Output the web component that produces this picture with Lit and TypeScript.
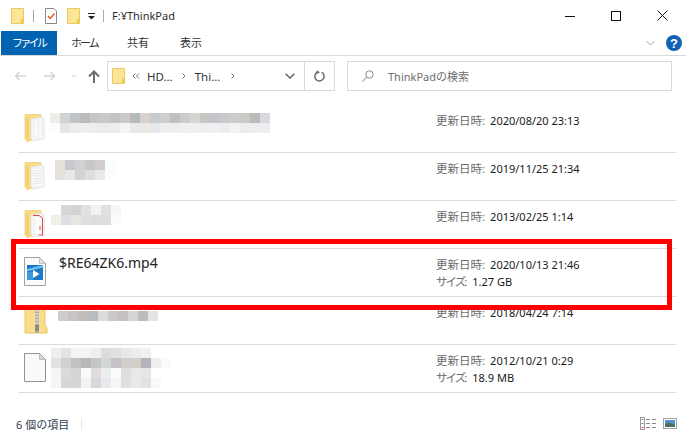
import { LitElement, html, css, svg } from "lit";
import { customElement } from "lit/decorators.js";

type Mosaic = { left: number; top: number; cells: string[][]; offsets?: number[] };

const folderDoc = (kind: "plain" | "lined" | "red") => html`<svg class="ficon" width="24" height="30" viewBox="0 0 24 30">
  <path d="M1 1.5H17V4H17.5V25L3 28.5 1 26Z" fill="#f9dd8c" stroke="#eccb6c" stroke-width=".7"/>
  <path d="M1.5 4V25.5L5 27.5V5Z" fill="#f4d070"/>
  <path d="M7 6 17 4 20 6V26L10 28 7 26Z" fill="#f7f7f7" stroke="#e0e0e0" stroke-width=".8"/>
  <path d="M10 7H18V25.5H10Z" fill="#fbfbfb" stroke="#e6e6e6" stroke-width=".7"/>
  <path d="M18 9 21 9.5V26.5L14 27.5 18 25.5Z" fill="#f0f0f0"/>
  ${kind === "lined" ? svg`<path d="M11 10h6M11 12.5h6M11 15h6M11 17.5h6M11 20h6M11 22.5h6" stroke="#dedede" stroke-width=".8"/>` : ""}
  ${kind === "plain" ? svg`<path d="M14 7V25" stroke="#e4e4e4" stroke-width=".8"/>` : ""}
  ${kind === "red" ? svg`<path d="M9 6.5H15L18.5 9V26H15" fill="none" stroke="#e8474a" stroke-width="1"/><path d="M16 17v4" stroke="#e8474a" stroke-width="1"/>` : ""}
</svg>`;

const videoIcon = html`<svg class="ficon" width="22" height="29" viewBox="0 0 22 29">
  <path d="M.5.5H15.5L21.5 6.5V28.5H.5Z" fill="#fafafa" stroke="#a2a2a2"/>
  <path d="M15.5.5V6.5H21.5Z" fill="#e2e2e2" stroke="#a8a8a8" stroke-width=".6"/>
  <rect x="3" y="8" width="16" height="15" fill="#1b78c4"/>
  <path d="M3 12 19 8V10.5L3 14.5Z" fill="#6cc0f0"/>
  <path d="M3 15H9V23H3Z" fill="#3f97da"/>
  <path d="M9 13 15.5 17 9 21Z" fill="#ffffff"/>
</svg>`;

const zipIcon = html`<svg class="ficon" width="24" height="29" viewBox="0 0 24 29">
  <path d="M1 1H21V20L23 23V28H1Z" fill="#f9dd8c" stroke="#ecc861"/>
  <rect x="11" y="0" width="4" height="28" fill="#b0aca0"/>
  <path d="M11 3h4M11 6h4M11 9h4M11 12h4M11 15h4M11 18h4" stroke="#eeeeee" stroke-width="1"/>
  <rect x="11" y="20" width="4" height="6" fill="#8d8d86"/>
</svg>`;

const blankIcon = html`<svg class="ficon" width="22" height="29" viewBox="0 0 22 29">
  <path d="M.5.5H15.5L21.5 6.5V28.5H.5Z" fill="#f8f9fa" stroke="#939393"/>
  <path d="M15.5.5V6.5H21.5Z" fill="#d6d6d6" stroke="#a0a0a0" stroke-width=".6"/>
</svg>`;

const smallFolder = html`<svg width="13" height="16" viewBox="0 0 13 16">
  <path d="M.5.5H12.5V15.5H.5Z" fill="#fbe597" stroke="#ecca62"/>
  <path d="M10 10.5H12.5V15.5H10Z" fill="#f2c94f"/>
</svg>`;

const rows: { icon: unknown; date: string; size?: string; name?: string; mosaic?: Mosaic }[] = [
  {
    icon: folderDoc("plain"),
    date: "2020/08/20 23:13",
    mosaic: {
      left: 0, top: 8,
      cells: [
        ["f0ece8","d0d4d6","c0c2c4","bbbcb9","c8c6c4","c9c8c7","c2c4c3","ccc9c8","b6bab9","d8d2cc","c8ccd2","cfcecd","c0c0c0","ccccd0","d4d6d2","c8c6c4","c4c6cc","cac8c8","cccccb","c8cac4","bebabc","d8d8de"],
        ["fcfcfb","e6e5e4","eeedeb","eceef0","ededee","eeecea","eceeee","f4f4f4","e8e9e9","ece9e4","e4e8ec","eceef0","eeeeec","f0f0f0","eef0ef","f0eeec","f0f0f2","ecedf0","f4f3f1","eceeee","f0eeec","eeeef2"],
      ],
    },
  },
  {
    icon: folderDoc("lined"),
    date: "2019/11/25 21:34",
    mosaic: {
      left: 5, top: 7,
      cells: [
        ["e4e0dc","c8c8d0","d4d0d2","c8c8c8","d2ced0","fcfdff"],
        ["e4e0dc","e8e8ea","d6d4d2","dcdee0","ebe9e5","fbfcfe"],
      ],
    },
  },
  {
    icon: folderDoc("red"),
    date: "2013/02/25 1:14",
    mosaic: {
      left: 1, top: 4, offsets: [10, 0],
      cells: [
        ["d8d6d6","d4d2d4","e2e0e0","f2f2f2","e2e0e0","f4f7fa"],
        ["f2eee8","dee0e4","e4e6e4","e0dede","dedcdc","dedcdc","fafbfc"],
      ],
    },
  },
  { icon: videoIcon, date: "2020/10/13 21:46", size: "1.27 GB", name: "$RE64ZK6.mp4" },
  {
    icon: zipIcon,
    date: "2018/04/24 7:14",
    mosaic: {
      left: 8, top: 14,
      cells: [["d0cccc","c6c4c4","c0bcbc","b8bcc0","dcdcdc","ccc8c8","c4c0c0","d4d4d4","bcbcb8","e4e4e4"]],
    },
  },
  {
    icon: blankIcon,
    date: "2012/10/21 0:29",
    size: "18.9 MB",
    mosaic: {
      left: 1, top: 3,
      cells: [
        ["eeeeee","e2e4e4","f4f4f4","f4f4f2","f0eeee","dcdcd8","e0e0e4","e8e8e8","ececea","f0f0f0"],
        ["e2e2e2","d0d0d0","c2c2c2","b8b8b8","c8c6c4","d2d8da","c4c2c6","d2cece","d0cec6","b4b4bc","eeeeee","f8fafb"],
        ["f6f4f4","dadcdc","d4d4d4","fafafa","e0dcdc","eaeef0","fcfcfc","e2dee0","eae8e6","e6e6e8"],
        ["f6f4f4","d6d8d8","d6d6d6","f2f2f0","d8d6d8","e6eaec","f6f6f4","e2dee2","e8eaea","e2e2e0","f8f9fa"],
      ],
    },
  },
];

@customElement("app-root")
export class AppRoot extends LitElement {
  static styles = css`
    :host {
      display: flex;
      flex-direction: column;
      position: relative;
      width: 686px;
      height: 437px;
      overflow: hidden;
      background: #fff;
      color: #1a1a1a;
      font: 11px "Noto Sans", "Noto Sans CJK JP", sans-serif;
    }
    svg { display: block; flex: none; }
    .title {
      height: 31px;
      display: flex;
      align-items: center;
      padding-left: 11px;
      padding-right: 1px;
      flex: none;
    }
    .vsep { width: 1px; height: 12px; background: #a9a9a9; }
    .q1 { margin-left: 9px; }
    .q2 { margin-left: 11px; }
    .q3 { margin-left: 9px; }
    .q4 { margin-left: 8px; }
    .path { margin-left: 8px; color: #2b2b2b; }
    .win { margin-left: auto; display: flex; }
    .win span { width: 46px; height: 31px; display: flex; align-items: center; justify-content: center; }
    .ribbon {
      height: 24px;
      display: flex;
      align-items: center;
      padding-left: 1px;
      border-bottom: 1px solid #d9d9d9;
      flex: none;
      color: #333;
    }
    .tab { height: 24px; line-height: 23px; }
    .tab.file { width: 56px; box-sizing: border-box; padding-left: 11px; background: #0063b1; color: #fff; letter-spacing: -2.7px; }
    .t1 { margin-left: 14px; letter-spacing: -2px; width: 28px; }
    .t2 { margin-left: 28px; }
    .t3 { margin-left: 31px; }
    .rib-right { margin-left: auto; display: flex; align-items: center; gap: 11px; padding-right: 4px; }
    .nav {
      height: 49px;
      flex: none;
      display: flex;
      padding: 5px 14px 0 14px;
      box-sizing: border-box;
    }
    .navbtns { display: flex; align-items: center; height: 30px; width: 93px; flex: none; }
    .box {
      height: 30px;
      box-sizing: border-box;
      border: 1px solid #d9d9d9;
      display: flex;
      align-items: center;
    }
    .addr { width: 228px; padding-left: 4px; color: #333; font-size: 11.5px; }
    .addr .crumb { margin-left: 7px; }
    .addr .drop { margin-left: auto; width: 19px; height: 100%; display: flex; align-items: center; }
    .addr .refresh { width: 30px; height: 100%; border-left: 1px solid #d9d9d9; display: flex; align-items: center; justify-content: center; box-sizing: border-box; }
    .search { width: 325px; margin-left: 12px; padding-left: 14px; color: #6d6d6d; gap: 14px; }
    .list { flex: none; margin-left: 19px; width: 657px; }
    .row {
      height: 48px;
      box-sizing: border-box;
      border-bottom: 1px solid #dcdcdc;
      display: flex;
      padding-left: 5px;
    }
    .ico { width: 26px; flex: none; padding-top: 8px; }
    .namecol { width: 386px; flex: none; }
    .name { font-size: 14px; padding-left: 9px; padding-top: 4px; color: #222; line-height: 20px; }
    .mosaic { display: flex; flex-direction: column; }
    .mrow { display: flex; }
    .cell { width: 10px; height: 10px; flex: none; }
    .meta { padding-top: 7px; line-height: 17px; font-size: 11px; white-space: nowrap; }
    .meta i { font-style: normal; color: #6d6d6d; margin-right: 5px; font-size: 11.5px; }
    .meta i.sz { letter-spacing: -2px; margin-right: 7px; }
    .status {
      flex: 1;
      display: flex;
      align-items: flex-end;
      padding: 0 9px 5px 16px;
      color: #33414f;
    }
    .status .sb { width: 1px; height: 12px; background: #e8e8e8; margin-left: 12px; margin-bottom: 2px; }
    .views { margin-left: auto; display: flex; gap: 7px; align-items: center; margin-bottom: 2px; }
    .mark {
      position: absolute;
      left: 11px;
      top: 239px;
      width: 661px;
      height: 71px;
      box-sizing: border-box;
      border: 5px solid #ff0000;
      pointer-events: none;
    }
  `;

  private mosaic(m: Mosaic) {
    return html`<div class="mosaic" style="padding-left:${m.left}px;padding-top:${m.top}px">
      ${m.cells.map(
        (r, i) => html`<div class="mrow" style="padding-left:${m.offsets?.[i] ?? 0}px">
          ${r.map((c) => html`<div class="cell" style="background:#${c}"></div>`)}
        </div>`
      )}
    </div>`;
  }

  render() {
    return html`
      <div class="title">
        ${smallFolder}
        <div class="vsep q1"></div>
        <svg class="q2" width="12" height="16" viewBox="0 0 12 16">
          <path d="M.5.5H9L11.5 3V15.5H.5Z" fill="#fff" stroke="#8a8a8a"/>
          <path d="M3 8 5.2 10.5 9.5 5.5" fill="none" stroke="#e2562c" stroke-width="1.4"/>
        </svg>
        <div style="width:10px"></div>
        ${smallFolder}
        <svg class="q3" style="margin-left:8px" width="7" height="8" viewBox="0 0 7 8">
          <path d="M0 1.5H7" stroke="#222" stroke-width="1"/><path d="M0 4 7 4 3.5 7.5Z" fill="#222"/>
        </svg>
        <div class="vsep q4"></div>
        <div class="path">F:¥ThinkPad</div>
        <div class="win">
          <span><svg width="10" height="10"><path d="M0 5.5H10" stroke="#111"/></svg></span>
          <span><svg width="10" height="10"><rect x=".5" y=".5" width="9" height="9" fill="none" stroke="#111"/></svg></span>
          <span><svg width="11" height="11"><path d="M.5.5 10.5 10.5M10.5.5 .5 10.5" stroke="#111"/></svg></span>
        </div>
      </div>
      <div class="ribbon">
        <div class="tab file">ファイル</div>
        <div class="tab t1">ホーム</div>
        <div class="tab t2">共有</div>
        <div class="tab t3">表示</div>
        <div class="rib-right">
          <svg width="9" height="6" viewBox="0 0 9 6"><path d="M.5 1 4.5 5 8.5 1" fill="none" stroke="#a8a8a8"/></svg>
          <svg width="16" height="16" viewBox="0 0 16 16">
            <circle cx="8" cy="8" r="8" fill="#0f62b4"/>
            <text x="8" y="12.5" text-anchor="middle" font-family="Liberation Sans" font-weight="700" font-size="13" fill="#fff">?</text>
          </svg>
        </div>
      </div>
      <div class="nav">
        <div class="navbtns">
          <svg width="12" height="10" viewBox="0 0 12 10"><path d="M12 5H1.5M5.5 1 1.5 5 5.5 9" fill="none" stroke="#d4d4d4" stroke-width="1.4"/></svg>
          <svg style="margin-left:18px" width="12" height="10" viewBox="0 0 12 10"><path d="M0 5H10.5M6.5 1 10.5 5 6.5 9" fill="none" stroke="#d4d4d4" stroke-width="1.4"/></svg>
          <svg style="margin-left:15px" width="6" height="4" viewBox="0 0 6 4"><path d="M.5.5 3 3 5.5.5" fill="none" stroke="#d4d4d4"/></svg>
          <svg style="margin-left:11px" width="12" height="13" viewBox="0 0 12 13"><path d="M6 13V2M1 6.5 6 1.5 11 6.5" fill="none" stroke="#6b6b6b" stroke-width="2"/></svg>
        </div>
        <div class="box addr">
          ${smallFolder}
          <svg style="margin-left:7px" width="8" height="6" viewBox="0 0 8 6"><path d="M3.5.5 1 3 3.5 5.5M7 .5 4.5 3 7 5.5" fill="none" stroke="#777"/></svg>
          <span class="crumb">HD...</span>
          <svg style="margin-left:9px" width="4" height="6" viewBox="0 0 4 6"><path d="M.5.5 3 3 .5 5.5" fill="none" stroke="#777"/></svg>
          <span class="crumb" style="margin-left:9px">Thi...</span>
          <svg style="margin-left:11px" width="4" height="6" viewBox="0 0 4 6"><path d="M.5.5 3 3 .5 5.5" fill="none" stroke="#777"/></svg>
          <div class="drop"><svg width="10" height="6" viewBox="0 0 10 6"><path d="M.7.7 5 5 9.3.7" fill="none" stroke="#666" stroke-width="1.5"/></svg></div>
          <div class="refresh"><svg width="11" height="12" viewBox="0 0 11 12"><path d="M7.5 2.2A4.6 4.6 0 1 1 3 2.4" fill="none" stroke="#6b6b6b" stroke-width="1.5"/><path d="M3.5 0V4L7 2Z" fill="#6b6b6b" transform="translate(-1 0.3)"/></svg></div>
        </div>
        <div class="box search">
          <svg width="12" height="12" viewBox="0 0 12 12"><circle cx="7.5" cy="4.5" r="3.7" fill="none" stroke="#8a8a8a"/><path d="M4.8 7.2 .5 11.5" stroke="#c9a58f" stroke-width="1.1"/></svg>
          <span>ThinkPadの検索</span>
        </div>
      </div>
      <div class="list">
        ${rows.map(
          (r) => html`<div class="row">
            <div class="ico">${r.icon}</div>
            <div class="namecol">
              ${r.name ? html`<div class="name">${r.name}</div>` : ""}
              ${r.mosaic ? this.mosaic(r.mosaic) : ""}
            </div>
            <div class="meta">
              <div><i>更新日時:</i>${r.date}</div>
              ${r.size ? html`<div><i class="sz">サイズ:</i>${r.size}</div>` : ""}
            </div>
          </div>`
        )}
      </div>
      <div class="status">
        <span>6 個の項目</span>
        <div class="sb"></div>
        <div class="views">
          <svg width="16" height="13" viewBox="0 0 16 13">
            <rect x=".5" y=".5" width="4" height="12" fill="#fff" stroke="#999"/>
            <path d="M1.5 2.5h2M1.5 6.5h2" stroke="#777"/><path d="M1.5 10.5h2" stroke="#d33"/>
            <path d="M6 2.5h4M12 2.5h4M6 6.5h4M12 6.5h4M6 10.5h4M12 10.5h4" stroke="#888"/>
          </svg>
          <svg width="14" height="11" viewBox="0 0 14 11">
            <rect x=".5" y=".5" width="13" height="10" fill="#fff" stroke="#a0a0a0"/>
            <rect x="2" y="2" width="10" height="7" fill="#4f93c8"/>
            <path d="M2 6 6 4.5 12 7V9H2Z" fill="#47705a"/>
          </svg>
        </div>
      </div>
      <div class="mark"></div>
    `;
  }
}
